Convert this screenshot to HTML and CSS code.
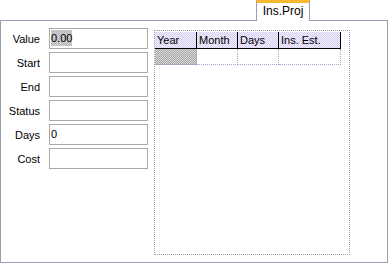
FILE: index.html
```html
<!DOCTYPE html>
<html lang="en">
<head>
    <meta charset="UTF-8">
    <title>Ins.Proj</title>
    <link rel="stylesheet" href="styles.css">
</head>
<body>
    <div class="tabs">
        <div class="tab">Ins.Proj</div>
    </div>
    <div class="panel">
        <div class="fields">
            <div class="row"><label>Value</label><div class="box"><span class="sel">0.00</span></div></div>
            <div class="row"><label>Start</label><div class="box"></div></div>
            <div class="row"><label>End</label><div class="box"></div></div>
            <div class="row"><label>Status</label><div class="box"></div></div>
            <div class="row"><label>Days</label><div class="box">0</div></div>
            <div class="row"><label>Cost</label><div class="box"></div></div>
        </div>
        <div class="grid">
            <div class="head">
                <div class="hc c1">Year</div>
                <div class="hc c2">Month</div>
                <div class="hc c3">Days</div>
                <div class="hc c4">Ins. Est.</div>
            </div>
            <div class="line">
                <div class="dc c1 current"></div>
                <div class="dc c2"></div>
                <div class="dc c3"></div>
                <div class="dc c4"></div>
            </div>
        </div>
    </div>
</body>
</html>
```

FILE: styles.css
```css
body {
    margin: 0;
    width: 388px;
    height: 263px;
    background: #fff;
    font-family: "Liberation Sans", Arial, sans-serif;
    font-size: 11px;
    color: #000;
}

.tabs {
    display: flex;
    justify-content: flex-end;
    padding-right: 78px;
    height: 20px;
}

.tab {
    position: relative;
    z-index: 1;
    width: 52px;
    height: 18px;
    margin-bottom: -1px;
    border-left: 1px solid #9c9cb4;
    border-right: 1px solid #9c9cb4;
    border-top: 3px solid #f8b830;
    background: #fff;
    text-align: center;
    line-height: 17px;
    font-size: 12px;
}

.panel {
    display: flex;
    height: 241px;
    border: 1px solid #9c9cb4;
    padding-top: 7px;
    box-sizing: border-box;
    height: 243px;
}

.fields {
    display: flex;
    flex-direction: column;
    gap: 3px;
    padding-left: 0;
}

.row {
    display: flex;
    align-items: center;
    height: 21px;
}

.row label {
    width: 39px;
    text-align: right;
    padding-right: 9px;
}

.box {
    width: 97px;
    height: 19px;
    border: 1px solid #a4aca4;
    line-height: 19px;
    padding-left: 1px;
    box-sizing: content-box;
    width: 96px;
}

.sel {
    background: repeating-conic-gradient(#b4b4b4 0 25%, #d4d4d4 0 50%) 0 0 / 2px 2px;
    padding: 2px 0 2px 0;
}

.grid {
    margin-left: 6px;
    margin-top: 2px;
    width: 194px;
    height: 222px;
    border: 1px dotted #9c9cb4;
    padding-top: 1px;
}

.head, .line {
    display: flex;
}

.hc {
    height: 16px;
    line-height: 16px;
    padding-left: 2px;
    border-right: 1px solid #000;
    border-bottom: 1px solid #000;
    background: repeating-conic-gradient(#d4ccf4 0 25%, #f4f2fc 0 50%) 0 0 / 2px 2px;
    box-sizing: border-box;
    height: 17px;
}

.c1 { width: 42px; }
.c2 { width: 41px; }
.c3 { width: 41px; }
.c4 { width: 62px; }

.dc {
    height: 16px;
    border-right: 1px dotted #a8a4cc;
    border-bottom: 1px dotted #a8a4cc;
    box-sizing: border-box;
}

.dc.current {
    background: repeating-conic-gradient(#a8a8a8 0 25%, #d8d8d8 0 50%) 0 0 / 2px 2px;
}
```
